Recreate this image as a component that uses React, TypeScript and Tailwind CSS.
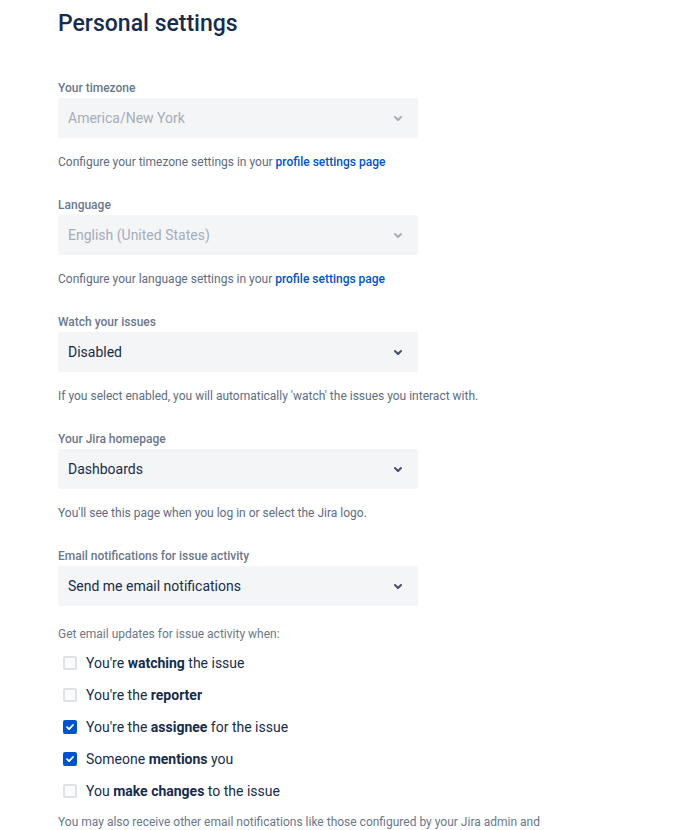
import React from "react";

const font = { fontFamily: 'Roboto, "Liberation Sans", sans-serif' };

function Chevron({ disabled }: { disabled?: boolean }) {
  return (
    <svg width="24" height="24" viewBox="0 0 24 24" className="shrink-0">
      <path
        d="M8.292 10.293a1.009 1.009 0 000 1.419l2.939 2.965c.218.215.5.322.779.322s.556-.107.769-.322l2.93-2.955a1.01 1.01 0 000-1.419.987.987 0 00-1.406 0l-2.298 2.317-2.307-2.327a.99.99 0 00-1.406 0z"
        fill={disabled ? "#a5adba" : "#42526e"}
      />
    </svg>
  );
}

function Select({ value, disabled }: { value: string; disabled?: boolean }) {
  return (
    <div className="w-[360px] h-10 rounded-[3px] bg-[#f4f5f7] flex items-center justify-between pl-[10px] pr-[8px]">
      <span className={`text-[14px] ${disabled ? "text-[#a5adba]" : "text-[#172b4d]"}`}>{value}</span>
      <Chevron disabled={disabled} />
    </div>
  );
}

function Field({
  label,
  value,
  disabled,
  help,
}: {
  label: string;
  value: string;
  disabled?: boolean;
  help: React.ReactNode;
}) {
  return (
    <div className="flex flex-col">
      <div className="text-[12px] font-medium text-[#6b778c] leading-4 mb-[2px]">{label}</div>
      <Select value={value} disabled={disabled} />
      <div className="text-[12px] text-[#5e6c84] leading-4 mt-[16px]">{help}</div>
    </div>
  );
}

function Check({ checked, children }: { checked?: boolean; children: React.ReactNode }) {
  return (
    <div className="flex items-center h-8 pl-[5px]">
      {checked ? (
        <div className="w-[14px] h-[14px] rounded-[2px] bg-[#0052cc] flex items-center justify-center">
          <svg width="10" height="10" viewBox="0 0 10 10">
            <path d="M2 5.2 L4.1 7.2 L8 3" fill="none" stroke="white" strokeWidth="1.8" strokeLinecap="round" strokeLinejoin="round" />
          </svg>
        </div>
      ) : (
        <div className="w-[14px] h-[14px] rounded-[2px] border-2 border-[#dfe1e6] bg-[#fafbfc]" />
      )}
      <span className="ml-[9px] text-[14px] text-[#172b4d]">{children}</span>
    </div>
  );
}

export default function App() {
  return (
    <div className="bg-white w-[689px] h-[830px] overflow-hidden pl-[58px]" style={font}>
      <h1 className="text-[23px] font-medium text-[#172b4d] leading-7 pt-[10px]">Personal settings</h1>
      <div className="flex flex-col gap-[27px] mt-[42px]">
        <Field
          label="Your timezone"
          value="America/New York"
          disabled
          help={
            <>
              Configure your timezone settings in your{" "}
              <span className="text-[#0052cc] font-medium">profile settings page</span>
            </>
          }
        />
        <Field
          label="Language"
          value="English (United States)"
          disabled
          help={
            <>
              Configure your language settings in your{" "}
              <span className="text-[#0052cc] font-medium">profile settings page</span>
            </>
          }
        />
        <Field
          label="Watch your issues"
          value="Disabled"
          help="If you select enabled, you will automatically 'watch' the issues you interact with."
        />
        <Field
          label="Your Jira homepage"
          value="Dashboards"
          help="You'll see this page when you log in or select the Jira logo."
        />
        <div className="flex flex-col">
          <div className="text-[12px] font-medium text-[#6b778c] leading-4 mb-[2px]">Email notifications for issue activity</div>
          <Select value="Send me email notifications" />
          <div className="text-[12px] text-[#6b778c] leading-4 mt-[20px]">Get email updates for issue activity when:</div>
          <div className="flex flex-col mt-[5px]">
            <Check>
              You're <b className="font-bold">watching</b> the issue
            </Check>
            <Check>
              You're the <b className="font-bold">reporter</b>
            </Check>
            <Check checked>
              You're the <b className="font-bold">assignee</b> for the issue
            </Check>
            <Check checked>
              Someone <b className="font-bold">mentions</b> you
            </Check>
            <Check>
              You <b className="font-bold">make changes</b> to the issue
            </Check>
          </div>
          <div className="text-[12px] text-[#6b778c] leading-4 mt-[7px]">
            You may also receive other email notifications like those configured by your Jira admin and
          </div>
        </div>
      </div>
    </div>
  );
}
